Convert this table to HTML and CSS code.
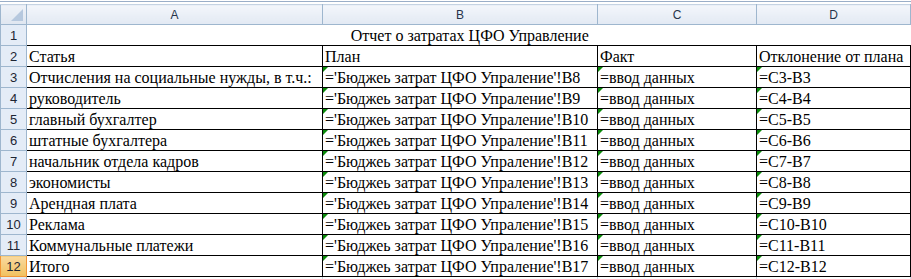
FILE: index.html
```html
<!DOCTYPE html>
<html>
<head>
<meta charset="utf-8">
<link rel="stylesheet" href="styles.css">
</head>
<body>
<div class="topline"></div>
<table class="sheet">
  <colgroup>
    <col class="c-rh"><col class="c-a"><col class="c-b"><col class="c-c"><col class="c-d">
  </colgroup>
  <thead>
    <tr class="hdr">
      <th class="corner"><span class="tri"></span></th>
      <th>A</th><th>B</th><th>C</th><th>D</th>
    </tr>
  </thead>
  <tbody>
    <tr class="r1"><th class="rh">1</th><td colspan="4" class="title">Отчет о затратах ЦФО Управление</td></tr>
    <tr class="bx"><th class="rh">2</th><td>Статья</td><td>План</td><td>Факт</td><td>Отклонение от плана</td></tr>
    <tr class="bx"><th class="rh">3</th><td>Отчисления на социальные нужды, в т.ч.:</td><td class="f">='Бюджеь затрат ЦФО Упраление'!B8</td><td class="f">=ввод данных</td><td class="f">=C3-B3</td></tr>
    <tr class="bx"><th class="rh">4</th><td>руководитель</td><td class="f">='Бюджеь затрат ЦФО Упраление'!B9</td><td class="f">=ввод данных</td><td class="f">=C4-B4</td></tr>
    <tr class="bx"><th class="rh">5</th><td>главный бухгалтер</td><td class="f">='Бюджеь затрат ЦФО Упраление'!B10</td><td class="f">=ввод данных</td><td class="f">=C5-B5</td></tr>
    <tr class="bx"><th class="rh">6</th><td>штатные бухгалтера</td><td class="f">='Бюджеь затрат ЦФО Упраление'!B11</td><td class="f">=ввод данных</td><td class="f">=C6-B6</td></tr>
    <tr class="bx"><th class="rh">7</th><td>начальник отдела кадров</td><td class="f">='Бюджеь затрат ЦФО Упраление'!B12</td><td class="f">=ввод данных</td><td class="f">=C7-B7</td></tr>
    <tr class="bx"><th class="rh">8</th><td>экономисты</td><td class="f">='Бюджеь затрат ЦФО Упраление'!B13</td><td class="f">=ввод данных</td><td class="f">=C8-B8</td></tr>
    <tr class="bx"><th class="rh">9</th><td>Арендная плата</td><td class="f">='Бюджеь затрат ЦФО Упраление'!B14</td><td class="f">=ввод данных</td><td class="f">=C9-B9</td></tr>
    <tr class="bx"><th class="rh">10</th><td>Реклама</td><td class="f">='Бюджеь затрат ЦФО Упраление'!B15</td><td class="f">=ввод данных</td><td class="f">=C10-B10</td></tr>
    <tr class="bx"><th class="rh">11</th><td>Коммунальные платежи</td><td class="f">='Бюджеь затрат ЦФО Упраление'!B16</td><td class="f">=ввод данных</td><td class="f">=C11-B11</td></tr>
    <tr class="bx"><th class="rh sel">12</th><td>Итого</td><td class="f">='Бюджеь затрат ЦФО Упраление'!B17</td><td class="f">=ввод данных</td><td class="f">=C12-B12</td></tr>
    <tr class="r13"><th class="rh"></th><td></td><td></td><td></td><td></td></tr>
  </tbody>
</table>
</body>
</html>
```
FILE: styles.css
```css
html, body {
  margin: 0;
  padding: 0;
  background: #ffffff;
  overflow: hidden;
}
.topline {
  height: 1px;
  margin-top: 1px;
  margin-bottom: 2px;
  background: #9aaec8;
}
.sheet {
  border-collapse: collapse;
  table-layout: fixed;
  width: 910px;
}
.c-rh { width: 26px; }
.c-a { width: 296px; }
.c-b { width: 275px; }
.c-c { width: 159px; }
.c-d { width: 154px; }

.hdr th {
  height: 19px;
  padding: 0;
  font-family: "Liberation Sans", Arial, sans-serif;
  font-size: 12px;
  font-weight: normal;
  color: #27344a;
  text-align: center;
  background: linear-gradient(#f3f6fb, #e2e9f3);
  border: 1px solid #9eb6ce;
  border-top: 1px solid #c5d3e3;
}
.hdr th.corner {
  position: relative;
  background: linear-gradient(#eef2f8, #dfe6f0);
}
.corner .tri {
  position: absolute;
  right: 3px;
  bottom: 3px;
  width: 0;
  height: 0;
  border-left: 12px solid transparent;
  border-bottom: 12px solid #b6c8de;
}
th.rh {
  height: 20px;
  padding: 0;
  font-family: "Liberation Sans", Arial, sans-serif;
  font-size: 13px;
  font-weight: normal;
  color: #1d2533;
  text-align: center;
  background: #e4ecf7;
  border: 1px solid #9eb6ce;
}
th.rh.sel {
  background: linear-gradient(#f9d99f, #f1c15f);
  border: 1px solid #f29536;
}
td {
  padding: 0 0 0 2px;
  font-family: "Liberation Serif", "Times New Roman", serif;
  font-size: 16px;
  line-height: 18px;
  color: #000;
  white-space: nowrap;
  overflow: hidden;
  vertical-align: bottom;
  border: 1px solid #d0d7e5;
}
.r1 td.title {
  text-align: center;
  border-bottom: 1px solid #000;
  border-left: none;
  border-right: none;
}
.bx td {
  border: 1px solid #000;
}
td.f {
  position: relative;
}
td.f::before {
  content: "";
  position: absolute;
  left: 0;
  top: 0;
  width: 0;
  height: 0;
  border-top: 5px solid #0a8a0a;
  border-right: 5px solid transparent;
}
.r13 th.rh, .r13 td {
  height: 20px;
}
```
